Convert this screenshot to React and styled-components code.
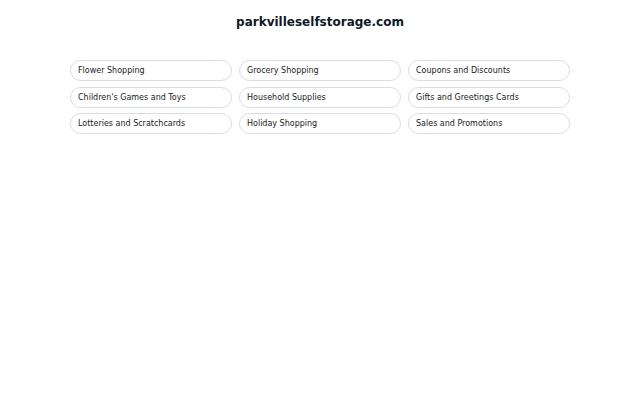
import React from 'react'
import styled, { createGlobalStyle } from 'styled-components'

const GlobalStyle = createGlobalStyle`
  body {
    margin: 0;
    background: #ffffff;
    font-family: "DejaVu Sans", "Liberation Sans", sans-serif;
    color: #1f2328;
  }
`

const Page = styled.div`
  width: 640px;
  min-height: 400px;
  display: flex;
  flex-direction: column;
  align-items: center;
  padding-top: 14px;
  box-sizing: border-box;
`

const Title = styled.h1`
  margin: 0;
  font-size: 12px;
  font-weight: bold;
  line-height: 16px;
  color: #111827;
`

const Grid = styled.div`
  margin-top: 30px;
  width: 500px;
  display: grid;
  grid-template-columns: repeat(3, 1fr);
  column-gap: 7px;
  row-gap: 5.5px;
`

const Pill = styled.a`
  display: flex;
  align-items: center;
  box-sizing: border-box;
  height: 21px;
  padding: 0 7px;
  border: 1px solid #d9dce1;
  border-radius: 999px;
  font-size: 8px;
  color: #222;
  text-decoration: none;
  white-space: nowrap;
`

const links = [
  'Flower Shopping',
  'Grocery Shopping',
  'Coupons and Discounts',
  "Children's Games and Toys",
  'Household Supplies',
  'Gifts and Greetings Cards',
  'Lotteries and Scratchcards',
  'Holiday Shopping',
  'Sales and Promotions',
]

const App = () => {
  return (
    <>
      <GlobalStyle />
      <Page>
        <Title>parkvilleselfstorage.com</Title>
        <Grid>
          {links.map((l) => (
            <Pill key={l} href="#">{l}</Pill>
          ))}
        </Grid>
      </Page>
    </>
  )
}

export default App
